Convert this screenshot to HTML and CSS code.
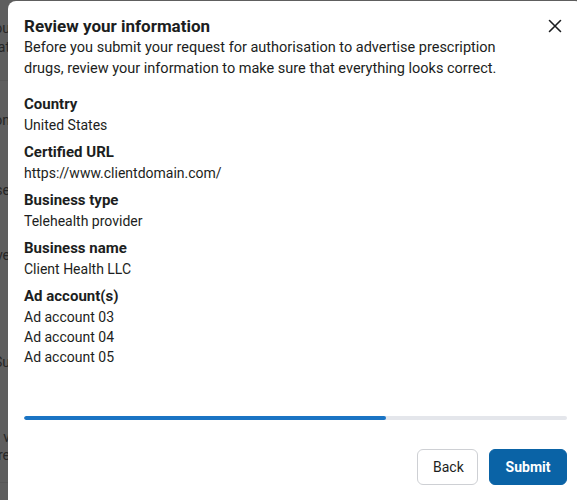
FILE: index.html
```html
<!DOCTYPE html>
<html lang="en">
<head>
<meta charset="utf-8">
<title>Review your information</title>
<link rel="stylesheet" href="styles.css">
</head>
<body>
<div class="page">
  <div class="bg-line t1"><span>You</span></div>
  <div class="bg-line t2"><span>that</span></div>
  <div class="bg-rule"></div>
  <div class="bg-line t3"><span>on</span></div>
  <div class="bg-line t4"><span>Use</span></div>
  <div class="bg-line t5"><span>Have</span></div>
  <div class="bg-line t6"><span>Su</span></div>
  <div class="bg-line t7"><span>v</span></div>
  <div class="bg-line t8"><span>are</span></div>
  <div class="bg-rule r2"></div>
</div>

<div class="modal" role="dialog" aria-labelledby="dlg-title">
  <button class="close" aria-label="Close">
    <svg viewBox="0 0 14 14" width="14" height="14"><path d="M1.5 1.5 12.5 12.5 M12.5 1.5 1.5 12.5" stroke="#1c1e21" stroke-width="1.6" stroke-linecap="round" fill="none"/></svg>
  </button>
  <h1 class="title" id="dlg-title">Review your information</h1>
  <p class="desc">Before you submit your request for authorisation to advertise prescription drugs, review your information to make sure that everything looks correct.</p>

  <dl class="fields">
    <dt>Country</dt>
    <dd>United States</dd>
    <dt>Certified URL</dt>
    <dd>https://www.clientdomain.com/</dd>
    <dt>Business type</dt>
    <dd>Telehealth provider</dd>
    <dt>Business name</dt>
    <dd>Client Health LLC</dd>
    <dt>Ad account(s)</dt>
    <dd>Ad account 03</dd>
    <dd class="more">Ad account 04</dd>
    <dd class="more">Ad account 05</dd>
  </dl>

  <div class="progress"><div class="progress-fill" style="width: 66.7%"></div></div>

  <div class="actions">
    <button class="btn btn-secondary">Back</button>
    <button class="btn btn-primary">Submit</button>
  </div>
</div>
</body>
</html>
```

FILE: styles.css
```css
html, body {
  margin: 0;
  padding: 0;
  height: 100%;
}
body {
  background: #5e5e5e;
  overflow: hidden;
  font-family: Roboto, "Noto Sans", "Liberation Sans", sans-serif;
  color: #1c1e21;
  position: relative;
}
.page {
  display: flex;
  flex-direction: column;
  color: #262626;
  font-size: 14px;
}
.bg-line {
  width: 10px;
  height: 20px;
  line-height: 20px;
  display: flex;
  justify-content: flex-end;
  white-space: nowrap;
}
.t1 { margin-top: 18px; }
.t2 { margin-top: -1px; }
.bg-rule {
  height: 1px;
  background: #575757;
  margin-top: 23px;
}
.t3 { margin-top: 29px; }
.t4 { margin-top: 50px; }
.t5 { margin-top: 45px; }
.t6 { margin-top: 87px; }
.t7 { margin-top: 55px; }
.t8 { margin-top: -2px; }
.r2 { margin-top: 17px; }

.modal {
  position: absolute;
  left: 8px;
  top: 1px;
  right: -6px;
  bottom: -8px;
  background: #fff;
  border-radius: 8px;
  padding: 15px 16px 0 16px;
  box-sizing: border-box;
}
.close {
  position: absolute;
  top: 13px;
  right: 16px;
  width: 24px;
  height: 24px;
  padding: 0;
  border: 0;
  background: transparent;
  display: flex;
  align-items: center;
  justify-content: center;
}
.title {
  margin: 0;
  font-size: 17px;
  line-height: 21px;
  font-weight: 700;
}
.desc {
  margin: 0;
  font-size: 14.5px;
  line-height: 21px;
  max-width: 500px;
}
.fields {
  margin: 15px 0 0 0;
}
.fields dt {
  font-size: 15px;
  font-weight: 700;
  line-height: 20px;
  margin-top: 7px;
}
.fields dt:first-child { margin-top: 0; }
.fields dd {
  margin: 1px 0 0 0;
  font-size: 14px;
  line-height: 20px;
}
.fields dd.more { margin-top: 0; }
.progress {
  margin-top: 49px;
  height: 4px;
  border-radius: 2px;
  background: #e4e6eb;
  overflow: hidden;
}
.progress-fill {
  height: 100%;
  background: #1a74c4;
  border-radius: 2px;
}
.actions {
  display: flex;
  justify-content: flex-end;
  gap: 11px;
  margin-top: 29px;
}
.btn {
  height: 36px;
  border-radius: 6px;
  font-family: inherit;
  font-size: 14px;
  padding: 0 15px;
  cursor: pointer;
}
.btn-secondary {
  background: #fff;
  border: 1px solid #ced0d4;
  color: #1c1e21;
  width: 61px;
}
.btn-primary {
  background: #0a63a6;
  border: 1px solid #0a63a6;
  color: #fff;
  font-weight: 700;
  width: 78px;
}
```
